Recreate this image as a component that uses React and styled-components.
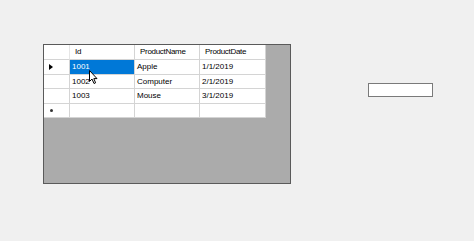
import React from 'react'
import styled, { createGlobalStyle } from 'styled-components';

const columns = ['Id', 'ProductName', 'ProductDate'];

const rows = [
  { id: '1001', name: 'Apple', date: '1/1/2019' },
  { id: '1002', name: 'Computer', date: '2/1/2019' },
  { id: '1003', name: 'Mouse', date: '3/1/2019' },
];

const App = () => {
  return (
    <>
      <GlobalStyle />
      <Form>
        <GridView>
          <Table>
            <HeaderCell $rowHeader />
            {columns.map((c) => (
              <HeaderCell key={c}>{c}</HeaderCell>
            ))}
            {rows.map((r, i) => (
              <React.Fragment key={r.id}>
                <RowHeader>{i === 0 && <CurrentArrow />}</RowHeader>
                <Cell $selected={i === 0}>{r.id}</Cell>
                <Cell>{r.name}</Cell>
                <Cell>{r.date}</Cell>
              </React.Fragment>
            ))}
            <RowHeader><NewRowStar /></RowHeader>
            <Cell />
            <Cell />
            <Cell />
          </Table>
          <Cursor width="10" height="15" viewBox="0 0 10 15">
            <path d="M0.5 0.5 L0.5 11.5 L3 9 L5 13.5 L6.6 12.8 L4.8 8.6 L8 8.6 Z" fill="#fff" stroke="#000" strokeWidth="1" strokeLinejoin="round" />
          </Cursor>
        </GridView>
        <TextBox />
      </Form>
    </>
  )
}

export default App;

const GlobalStyle = createGlobalStyle`
  html, body {
    margin: 0;
    padding: 0;
    background: #f0f0f0;
    width: 474px;
    height: 241px;
    overflow: hidden;
  }
  body {
    font-family: "Liberation Sans", Arial, sans-serif;
  }
`

const Form = styled.div`
  display: flex;
  align-items: flex-start;
  padding: 44px 0 0 43px;
`

const GridView = styled.div`
  position: relative;
  box-sizing: border-box;
  width: 248px;
  height: 140px;
  border: 1px solid #5a5a5a;
  background: #ababab;
`

const Table = styled.div`
  display: grid;
  grid-template-columns: 26px 65px 65px 66px;
  grid-template-rows: 15px 15px 14px 15px 14px;
  width: 222px;
  background: #fff;
`

const Cell = styled.div`
  box-sizing: border-box;
  border-right: 1px solid #d4d4d4;
  border-bottom: 1px solid #d4d4d4;
  padding: 0 0 0 2px;
  font-size: 8px;
  line-height: 14px;
  white-space: nowrap;
  overflow: hidden;
  background: ${(p) => (p.$selected ? '#0078d7' : '#fff')};
  color: ${(p) => (p.$selected ? '#fff' : '#000')};
`

const HeaderCell = styled(Cell)`
  padding-left: 5px;
  border-right: 1px solid ${(p) => (p.$rowHeader ? '#e6e6e6' : '#d4d4d4')};
  letter-spacing: -0.3px;
`

const RowHeader = styled.div`
  box-sizing: border-box;
  display: flex;
  align-items: center;
  padding-left: 5px;
  border-right: 1px solid #d4d4d4;
  border-bottom: 1px solid #d4d4d4;
`

const CurrentArrow = styled.span`
  width: 0;
  height: 0;
  border-top: 3px solid transparent;
  border-bottom: 3px solid transparent;
  border-left: 4px solid #000;
`

const NewRowStar = styled.span`
  width: 3px;
  height: 3px;
  margin-left: 1px;
  border-radius: 50%;
  background: #333;
`

const Cursor = styled.svg`
  position: absolute;
  left: 45px;
  top: 25px;
`

const TextBox = styled.div`
  box-sizing: border-box;
  width: 65px;
  height: 14px;
  margin: 39px 0 0 77px;
  border: 1px solid #7a7a7a;
  background: #fff;
`
